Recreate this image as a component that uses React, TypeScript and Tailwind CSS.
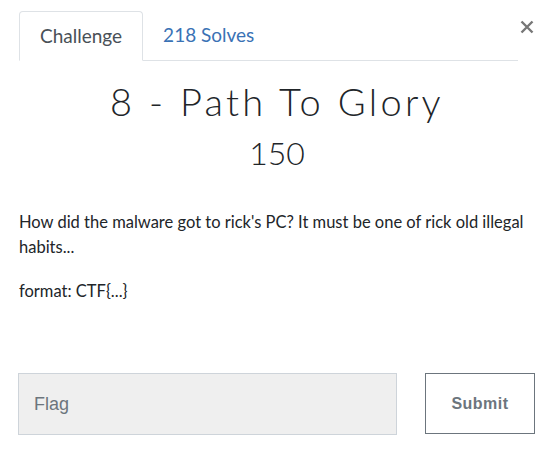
import React from "react";

export default function App() {
  return (
    <div className="relative w-[558px] h-[464px] bg-white font-['Lato',sans-serif] text-[#212529]">
      <div className="flex pt-[11px] pl-[19px]">
        <div className="flex w-[499px] border-b border-[#dee2e6]">
          <div className="-mb-px flex h-[50px] items-center rounded-t-[4px] border border-[#dee2e6] border-b-white bg-white px-[20px] text-[19px] text-[#495057]">
            Challenge
          </div>
          <div className="flex h-[49px] items-center px-[20px] text-[19px] text-[#3a72b5]">
            218 Solves
          </div>
        </div>
      </div>
      <button className="absolute left-[519px] top-[19px] flex h-[15px] w-[15px] items-center justify-center">
        <svg width="14" height="14" viewBox="0 0 14 14">
          <path d="M1.5 1.5 L12.5 12.5 M12.5 1.5 L1.5 12.5" stroke="#777" strokeWidth="2.4" strokeLinecap="butt" />
        </svg>
      </button>
      <div className="pl-[19px] pr-[23px]">
        <h1 className="mt-[17px] text-center text-[38px] font-light leading-[46px] tracking-[3.3px] text-[#212529]">
          8 - Path To Glory
        </h1>
        <div className="mt-[10px] text-center text-[32px] font-light leading-[38px] text-[#212529]">
          150
        </div>
        <div className="mt-[38px] text-[16.5px] leading-[25px] text-[#212529]">
          <p>How did the malware got to rick's PC? It must be one of rick old illegal habits...</p>
          <p className="mt-[19px]">format: CTF{"{...}"}</p>
        </div>
      </div>
      <div className="absolute left-[18px] top-[373px] flex gap-[28px]">
        <div className="flex h-[62px] w-[379px] items-center border border-[#ced4da] bg-[#efefef] pl-[15px] font-['Liberation_Sans',sans-serif] text-[18px] text-[#6c757d]">
          Flag
        </div>
        <div className="flex h-[61px] w-[110px] items-center justify-center border border-[#6c757d] font-['Liberation_Sans',sans-serif] text-[16px] font-bold tracking-[0.5px] text-[#6c757d]">
          Submit
        </div>
      </div>
    </div>
  );
}
